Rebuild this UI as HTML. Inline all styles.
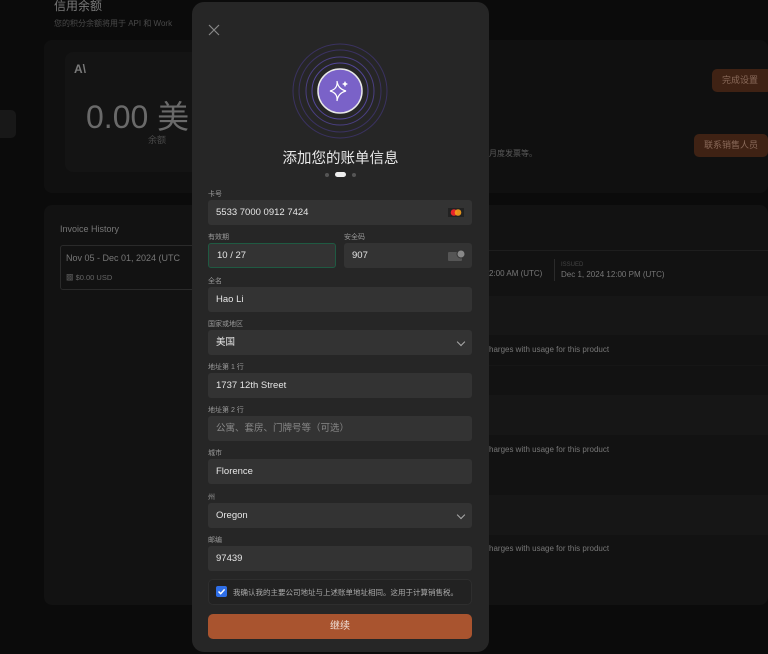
<!DOCTYPE html>
<html><head><meta charset="utf-8"><style>
*{box-sizing:border-box;margin:0;padding:0}
body{width:768px;height:654px;background:#0b0b0b;position:relative;overflow:hidden;font-family:"Liberation Sans","Noto Sans CJK SC",sans-serif;color:#ddd}
.a{position:absolute}
.lbl{position:absolute;left:208px;font-size:7px;color:#9a9a9a}
.f{position:absolute;left:208px;width:264px;height:25px;background:#333;border-radius:3px;font-size:9.5px;color:#e6e6e6;padding-left:8px;line-height:25px}
.chev{position:absolute;right:8px;top:9px;width:6px;height:6px;border-right:1.3px solid #aaa;border-bottom:1.3px solid #aaa;transform:rotate(45deg)}
.ch{font-size:8px;color:#777}
</style></head><body>
<!-- background -->
<div class="a" style="left:0;top:110px;width:16px;height:28px;background:#181818;border-radius:0 5px 5px 0"></div>
<div class="a" style="left:54px;top:-3px;font-size:12px;color:#7a7a7a">信用余额</div>
<div class="a" style="left:54px;top:18px;font-size:8px;color:#4a4a4a">您的积分余额将用于 API 和 Work</div>
<div class="a" style="left:44px;top:40px;width:724px;height:153px;background:#101010;border-radius:8px"></div>
<div class="a" style="left:65px;top:52px;width:140px;height:120px;background:#141414;border-radius:8px"></div>
<div class="a" style="left:74px;top:62px;font-size:12px;font-weight:bold;color:#7a7a7a">A\</div>
<div class="a" style="left:86px;top:92px;font-size:32px;color:#6a6a6a">0.00 美</div>
<div class="a" style="left:148px;top:133px;font-size:9px;color:#4a4a4a">余额</div>
<div class="a" style="left:712px;top:69px;width:60px;height:23px;background:#3f2214;border-radius:5px;font-size:9px;color:#8a6a5a;line-height:23px;padding-left:10px">完成设置</div>
<div class="a" style="left:694px;top:134px;width:74px;height:23px;background:#3f2214;border-radius:5px;font-size:9px;color:#8a6a5a;line-height:23px;padding-left:10px">联系销售人员</div>
<div class="a" style="left:489px;top:148px;font-size:8px;color:#5a5a5a">月度发票等。</div>
<div class="a" style="left:44px;top:205px;width:724px;height:400px;background:#121212;border-radius:8px"></div>
<div class="a" style="left:60px;top:224px;font-size:9px;color:#777">Invoice History</div>
<div class="a" style="left:60px;top:245px;width:140px;height:45px;border:1px solid #2a2a2a;border-radius:3px"></div>
<div class="a" style="left:66px;top:253px;font-size:9px;color:#777">Nov 05 - Dec 01, 2024 (UTC</div>
<div class="a" style="left:66px;top:272px;font-size:7.5px;color:#666">▩ $0.00 USD</div>
<div class="a" style="left:489px;top:250px;width:279px;height:1px;background:#1e1e1e"></div>
<div class="a" style="left:489px;top:269px;font-size:8px;color:#777">2:00 AM (UTC)</div>
<div class="a" style="left:554px;top:259px;width:1px;height:22px;background:#2a2a2a"></div>
<div class="a" style="left:561px;top:262px;font-size:6px;color:#444">ISSUED</div>
<div class="a" style="left:561px;top:270px;font-size:8px;color:#777">Dec 1, 2024 12:00 PM (UTC)</div>
<div class="a" style="left:489px;top:296px;width:279px;height:70px;background:#161616"></div>
<div class="a" style="left:489px;top:335px;width:279px;height:30px;background:#121212"></div>
<div class="a" style="left:489px;top:395px;width:279px;height:70px;background:#161616"></div>
<div class="a" style="left:489px;top:435px;width:279px;height:30px;background:#121212"></div>
<div class="a" style="left:489px;top:495px;width:279px;height:70px;background:#161616"></div>
<div class="a" style="left:489px;top:535px;width:279px;height:30px;background:#121212"></div>
<div class="a ch" style="left:489px;top:345px">harges with usage for this product</div>
<div class="a ch" style="left:489px;top:445px">harges with usage for this product</div>
<div class="a ch" style="left:489px;top:544px">harges with usage for this product</div>

<!-- modal -->
<div class="a" style="left:192px;top:2px;width:297px;height:650px;background:#262626;border-radius:12px"></div>
<svg class="a" style="left:208px;top:24px" width="12" height="12"><path d="M1 1L11 11M11 1L1 11" stroke="#888" stroke-width="1.2"/></svg>
<svg class="a" style="left:290px;top:41px" width="100" height="100">
<g fill="none" stroke="#3a3260" stroke-width="1"><circle cx="50" cy="50" r="47"/><circle cx="50" cy="50" r="41"/><circle cx="50" cy="50" r="34" stroke="#4a3f80"/><circle cx="50" cy="50" r="28" stroke="#54479a"/></g>
<circle cx="50" cy="50" r="22" fill="#7a62c8" stroke="#e8e8e8" stroke-width="1.5"/>
<path d="M47 40Q48 48 40 50Q48 52 47 60Q48 52 56 50Q48 48 47 40Z" fill="none" stroke="#fff" stroke-width="1.2"/>
<path d="M55 40l1 2 2 1-2 1-1 2-1-2-2-1 2-1z" fill="#fff"/>
</svg>
<div class="a" style="left:192px;width:297px;top:147px;text-align:center;font-size:14.5px;color:#e8e8e8">添加您的账单信息</div>
<div class="a" style="left:325px;top:173px;width:4px;height:4px;border-radius:2px;background:#555"></div>
<div class="a" style="left:335px;top:172px;width:11px;height:5px;border-radius:3px;background:#eee"></div>
<div class="a" style="left:352px;top:173px;width:4px;height:4px;border-radius:2px;background:#555"></div>

<div class="lbl" style="top:189px">卡号</div>
<div class="f" style="top:200px">5533 7000 0912 7424
<svg class="a" style="right:8px;top:8px" width="16" height="9"><rect width="16" height="9" fill="#222"/><circle cx="6" cy="4.5" r="3.3" fill="#e8242a"/><circle cx="10" cy="4.5" r="3.3" fill="#f79e1b" opacity=".9"/></svg></div>
<div class="lbl" style="top:232px">有效期</div>
<div class="lbl" style="top:232px;left:344px">安全码</div>
<div class="f" style="top:243px;width:128px;border:1px solid #1f5a42;line-height:23px">10 / 27</div>
<div class="f" style="top:243px;left:344px;width:128px">907
<svg class="a" style="right:6px;top:6px" width="18" height="12"><rect x="0" y="3" width="14" height="9" rx="1" fill="#555"/><circle cx="13" cy="5" r="4" fill="#888" stroke="#333"/></svg></div>
<div class="lbl" style="top:276px">全名</div>
<div class="f" style="top:287px">Hao Li</div>
<div class="lbl" style="top:319px">国家或地区</div>
<div class="f" style="top:330px">美国<div class="chev"></div></div>
<div class="lbl" style="top:362px">地址第 1 行</div>
<div class="f" style="top:373px">1737 12th Street</div>
<div class="lbl" style="top:405px">地址第 2 行</div>
<div class="f" style="top:416px;color:#888">公寓、套房、门牌号等（可选）</div>
<div class="lbl" style="top:448px">城市</div>
<div class="f" style="top:459px">Florence</div>
<div class="lbl" style="top:492px">州</div>
<div class="f" style="top:503px">Oregon<div class="chev"></div></div>
<div class="lbl" style="top:535px">邮编</div>
<div class="f" style="top:546px">97439</div>
<div class="a" style="left:208px;top:579px;width:264px;height:26px;border:1px solid #2e2e2e;border-radius:5px;background:#222"></div>
<div class="a" style="left:216px;top:586px;width:11px;height:11px;border-radius:2px;background:#2f6fe8"></div>
<svg class="a" style="left:216px;top:586px" width="11" height="11"><path d="M2.5 5.5L4.7 7.7L8.6 3.4" fill="none" stroke="#fff" stroke-width="1.5"/></svg>
<div class="a" style="left:233px;top:587px;font-size:7.5px;color:#aaa">我确认我的主要公司地址与上述账单地址相同。这用于计算销售税。</div>
<div class="a" style="left:208px;top:614px;width:264px;height:25px;border-radius:5px;background:#a9542f;text-align:center;line-height:25px;font-size:10px;color:#f0e0d8">继续</div>
</body></html>
